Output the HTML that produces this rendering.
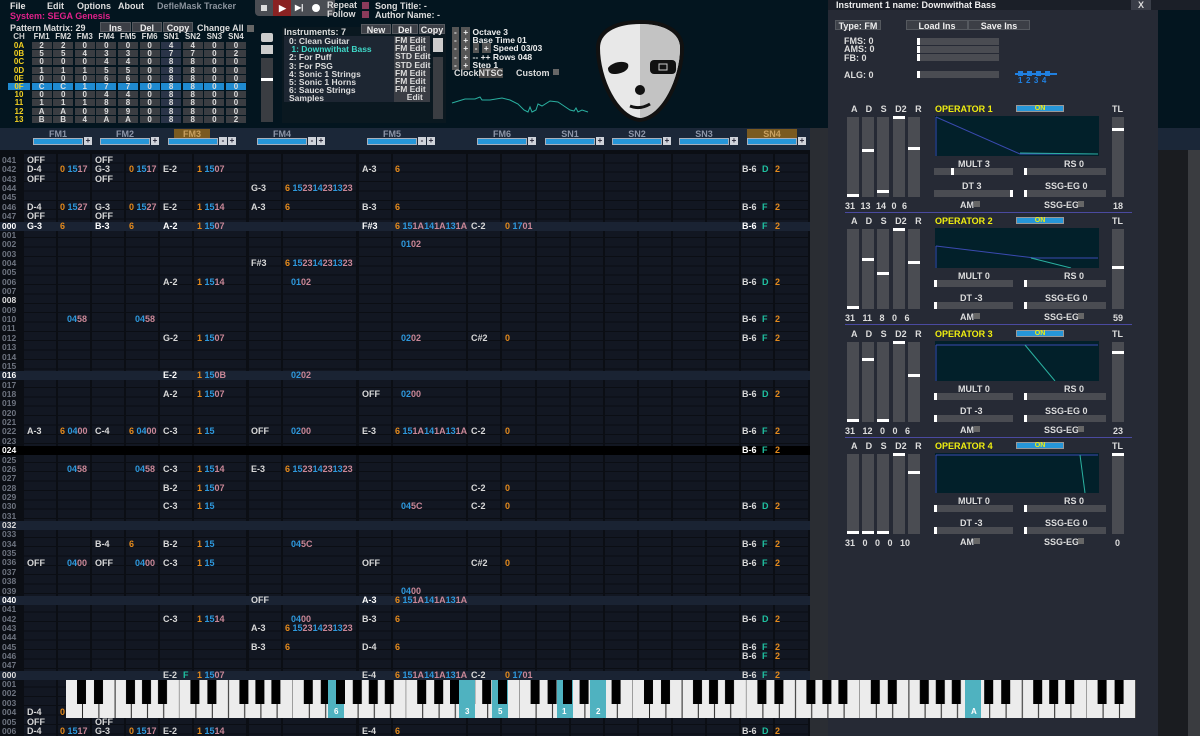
<!DOCTYPE html>
<html><head><meta charset="utf-8"><style>
*{margin:0;padding:0;box-sizing:border-box}
body{width:1200px;height:736px;overflow:hidden;background:#0b0e14;font:bold 9px "Liberation Sans",sans-serif;color:#ddd;position:relative}
.a{position:absolute;white-space:nowrap}
#top{position:absolute;left:0;top:0;width:828px;height:128px;background:#03151f}
.btn{position:absolute;background:#3c3f46;color:#eee;text-align:center;height:10px;line-height:10px;border:1px solid #55595f}
.mr{position:absolute;left:8px;height:7px;display:flex;font-size:8px;line-height:7px}
.mr span{width:20px;margin-right:1.6px;background:#3a3d42;text-align:center;color:#ddd}
.mr span:first-child{background:none;color:#f2d021;width:22px}
.mr span:nth-child(8){background:#2a3448}
.mr.h span{background:#1f8ad0;color:#ddd}
.mr.h span:first-child{background:#1f8ad0;color:#f2d021}
#hdr{position:absolute;left:0;top:128px;width:828px;height:22px;background:#1b2738}
.hl{position:absolute;top:1px;color:#8d96a8;text-align:center;width:50px}
.bar{position:absolute;top:10px;height:7px;width:50px;background:#2696d8;border:1px solid #a8b0bc}
.pl{position:absolute;top:9px;width:8px;height:8px;background:#cfd3da;color:#223;font-size:8px;line-height:8px;text-align:center}
#pat{position:absolute;left:0;top:150px;width:810px;height:586px;background:#0b0e14}
.col{position:absolute;top:4px;height:582px;background:repeating-linear-gradient(to bottom,#121722 0,#121722 8.36px,#0b0e14 8.36px,#0b0e14 9.36px)}
.hb{position:absolute;left:0;width:810px;height:9px;background:#1a2333}
.r{position:absolute;left:0;width:810px;height:9px;line-height:9px}
.r span{position:absolute}
.n{color:#d8d8d8}.o{color:#e48a1c}.b{color:#2e98dc}.p{color:#c98797}.g{color:#1fc0a0}
#ins{position:absolute;left:828px;top:0;width:330px;height:736px;background:#262a35}
.sl{position:absolute;background:#4a4c52}
.kn{position:absolute;background:#fff;height:3px}
.y{color:#f0ee10}
.pm{background:#555;padding:0 2px}
</style></head><body>
<div id="top">
 <div class="a" style="left:10px;top:1px;color:#e8e8e8">File</div>
 <div class="a" style="left:47px;top:1px">Edit</div>
 <div class="a" style="left:77px;top:1px">Options</div>
 <div class="a" style="left:118px;top:1px">About</div>
 <div class="a" style="left:157px;top:1px;color:#8a929c">DefleMask Tracker</div>
 <div class="a" style="left:10px;top:11px;color:#e0208a">System: SEGA Genesis</div>
 <div class="a" style="left:10px;top:23px">Pattern Matrix: 29</div>
 <div class="btn" style="left:100px;top:22px;width:31px">Ins</div>
 <div class="btn" style="left:132px;top:22px;width:30px">Del</div>
 <div class="btn" style="left:163px;top:22px;width:30px">Copy</div>
 <div class="a" style="left:197px;top:23px">Change All</div><div class="a" style="left:247px;top:25px;width:7px;height:7px;background:#666"></div>
 <div class="a" style="left:255px;top:0;width:80px;height:16px;background:#4a4d53;border-radius:0 0 4px 4px"></div>
 <div class="a" style="left:273px;top:0;width:18px;height:16px;background:#8a2222"></div>
 <div class="a" style="left:261px;top:5px;width:6px;height:6px;background:#ddd"></div>
 <div class="a" style="left:279px;top:3px;color:#fff;font-size:9px">▶</div>
 <div class="a" style="left:295px;top:3px;color:#fff;font-size:8px">▶|</div>
 <div class="a" style="left:312px;top:4px;width:8px;height:8px;border-radius:50%;background:#fff"></div>
 <div class="a" style="left:327px;top:0">Repeat</div><div class="a" style="left:362px;top:2px;width:7px;height:7px;background:#8a3a5a"></div>
 <div class="a" style="left:327px;top:9px">Follow</div><div class="a" style="left:362px;top:11px;width:7px;height:7px;background:#8a3a5a"></div>
 <div class="a" style="left:375px;top:1px">Song Title: -</div>
 <div class="a" style="left:375px;top:10px">Author Name: -</div>
 <div class="mr" style="top:33px;line-height:8px;height:8px"><span style="color:#ccc">CH</span><span style="background:none">FM1</span><span style="background:none">FM2</span><span style="background:none">FM3</span><span style="background:none">FM4</span><span style="background:none">FM5</span><span style="background:none">FM6</span><span style="background:none">SN1</span><span style="background:none">SN2</span><span style="background:none">SN3</span><span style="background:none">SN4</span></div>
 <div class="mr" style="top:42px"><span>0A</span><span>2</span><span>2</span><span>0</span><span>0</span><span>0</span><span>0</span><span>4</span><span>4</span><span>0</span><span>0</span></div>
 <div class="mr" style="top:50.2px"><span>0B</span><span>5</span><span>5</span><span>4</span><span>3</span><span>3</span><span>0</span><span>7</span><span>7</span><span>0</span><span>2</span></div>
 <div class="mr" style="top:58.4px"><span>0C</span><span>0</span><span>0</span><span>0</span><span>4</span><span>4</span><span>0</span><span>8</span><span>8</span><span>0</span><span>0</span></div>
 <div class="mr" style="top:66.6px"><span>0D</span><span>1</span><span>1</span><span>1</span><span>5</span><span>5</span><span>0</span><span>8</span><span>8</span><span>0</span><span>0</span></div>
 <div class="mr" style="top:74.8px"><span>0E</span><span>0</span><span>0</span><span>0</span><span>6</span><span>6</span><span>0</span><span>8</span><span>8</span><span>0</span><span>0</span></div>
 <div class="mr h" style="top:83px"><span>0F</span><span>C</span><span>C</span><span>1</span><span>7</span><span>7</span><span>0</span><span>8</span><span>8</span><span>0</span><span>0</span></div>
 <div class="mr" style="top:91.2px"><span>10</span><span>0</span><span>0</span><span>0</span><span>4</span><span>4</span><span>0</span><span>8</span><span>8</span><span>0</span><span>0</span></div>
 <div class="mr" style="top:99.4px"><span>11</span><span>1</span><span>1</span><span>1</span><span>8</span><span>8</span><span>0</span><span>8</span><span>8</span><span>0</span><span>0</span></div>
 <div class="mr" style="top:107.6px"><span>12</span><span>A</span><span>A</span><span>0</span><span>9</span><span>9</span><span>0</span><span>8</span><span>8</span><span>0</span><span>0</span></div>
 <div class="mr" style="top:115.8px"><span>13</span><span>B</span><span>B</span><span>4</span><span>A</span><span>A</span><span>0</span><span>8</span><span>8</span><span>0</span><span>2</span></div>
 <div class="a" style="left:261px;top:33px;width:12px;height:9px;background:#ccc;border-radius:2px"></div>
 <div class="a" style="left:261px;top:45px;width:12px;height:9px;background:#ccc"></div>
 <div class="a" style="left:261px;top:58px;width:12px;height:64px;background:#3a3d42"></div>
 <div class="a" style="left:261px;top:78px;width:12px;height:3px;background:#fff"></div>
 <div class="a" style="left:282px;top:27px;width:164px;height:96px;background:#0a1820"></div>
 <div class="a" style="left:284px;top:27px">Instruments: 7</div>
 <div class="btn" style="left:361px;top:24px;width:30px">New</div>
 <div class="btn" style="left:392px;top:24px;width:26px">Del</div>
 <div class="btn" style="left:419px;top:24px;width:26px">Copy</div>
 <div class="a" style="left:284px;top:36px;width:110px;height:66px;background:#1d2632"></div>
 <div class="a" style="left:289px;top:37px;line-height:8.2px;font-size:8.5px;color:#ddd;white-space:nowrap">0: Clean Guitar<br><span style="color:#3fd8c8">&nbsp;1: Downwithat Bass</span><br>2: For Puff<br>3: For PSG<br>4: Sonic 1 Strings<br>5: Sonic 1 Horns<br>6: Sauce Strings<br>Samples</div>
 <div class="a" style="left:394px;top:36px;width:36px;height:66px;background:#3a3d44;line-height:8.2px;font-size:8.5px;padding-left:1px">FM Edit<br>FM Edit<br>STD Edit<br>STD Edit<br>FM Edit<br>FM Edit<br>FM Edit<br>&nbsp; &nbsp; &nbsp;Edit</div>
 <div class="a" style="left:433px;top:38px;width:10px;height:14px;background:#ccc"></div>
 <div class="a" style="left:433px;top:57px;width:10px;height:62px;background:#3a3d42"></div>
 <div class="a" style="left:452px;top:28px;line-height:8.2px;font-size:8.5px;color:#eee">
 <span class="pm">-</span> <span class="pm">+</span> Octave 3<br>
 <span class="pm">-</span> <span class="pm">+</span> Base Time 01<br>
 <span class="pm">-</span> <span class="pm">+</span> <span class="pm">-</span> <span class="pm">+</span> Speed 03/03<br>
 <span class="pm">-</span> <span class="pm">+</span> -- ++ Rows 048<br>
 <span class="pm">-</span> <span class="pm">+</span> Step 1</div>
 <div class="a" style="left:454px;top:68px">Clock<span style="background:#444">NTSC</span></div>
 <div class="a" style="left:516px;top:68px">Custom</div><div class="a" style="left:553px;top:69px;width:6px;height:6px;background:#666"></div>
 <svg class="a" style="left:450px;top:90px" width="140" height="30"><polyline fill="none" stroke="#2ab0a0" stroke-width="1" points="2,13 15,9 25,9 30,7 32,10 40,10 52,8 60,10 68,14 74,20 78,22 80,17 82,22 86,20 88,14 92,16 100,11 108,12 114,16 120,20 124,21 126,18 128,22 132,20 138,22"/></svg>
 <svg class="a" style="left:594px;top:18px" width="92" height="106" viewBox="0 0 92 106">
  <path d="M46 4 C20 4 4 14 4 30 C4 60 22 100 46 102 C70 100 88 60 88 30 C88 14 72 4 46 4Z" fill="#e8e8e8" stroke="#111" stroke-width="4"/>
  <path d="M46 6 C70 6 86 15 86 30 C86 60 68 98 46 100Z" fill="#c3c3c3"/>
  <path d="M14 50 C18 44 30 42 34 46 C36 52 28 56 20 56 C16 56 14 54 14 50Z" fill="#111"/>
  <rect x="56" y="42" width="26" height="14" rx="4" fill="#111"/>
  <rect x="65" y="46" width="8" height="6" fill="none" stroke="#ccc" stroke-width="1"/>
  <ellipse cx="46" cy="72" rx="5" ry="5" fill="#111"/>
  <path d="M36 88 Q46 92 56 86" stroke="#111" stroke-width="3" fill="none"/>
 </svg>
</div>
<div id="hdr">
 <div class="hl" style="left:33px">FM1</div><div class="bar" style="left:33px"></div><div class="pl" style="left:84px">+</div>
 <div class="hl" style="left:100px">FM2</div><div class="bar" style="left:100px"></div><div class="pl" style="left:151px">+</div>
 <div class="hl" style="left:174px;width:36px;background:#7a5a20;color:#c8a060">FM3</div><div class="bar" style="left:168px"></div><div class="pl" style="left:219px">-</div><div class="pl" style="left:228px">+</div>
 <div class="hl" style="left:257px">FM4</div><div class="bar" style="left:257px"></div><div class="pl" style="left:308px">-</div><div class="pl" style="left:317px">+</div>
 <div class="hl" style="left:367px">FM5</div><div class="bar" style="left:367px"></div><div class="pl" style="left:418px">-</div><div class="pl" style="left:427px">+</div>
 <div class="hl" style="left:477px">FM6</div><div class="bar" style="left:477px"></div><div class="pl" style="left:528px">+</div>
 <div class="hl" style="left:545px">SN1</div><div class="bar" style="left:545px"></div><div class="pl" style="left:596px">+</div>
 <div class="hl" style="left:612px">SN2</div><div class="bar" style="left:612px"></div><div class="pl" style="left:663px">+</div>
 <div class="hl" style="left:679px">SN3</div><div class="bar" style="left:679px"></div><div class="pl" style="left:730px">+</div>
 <div class="hl" style="left:747px;background:#7a5a20;color:#c8a060">SN4</div><div class="bar" style="left:747px"></div><div class="pl" style="left:798px">+</div>
</div>
<div id="pat">
 <div class="col" style="left:24px;width:32px"></div><div class="col" style="left:58px;width:32px"></div>
 <div class="col" style="left:92px;width:32px"></div><div class="col" style="left:126px;width:32px"></div>
 <div class="col" style="left:160px;width:32px"></div><div class="col" style="left:194px;width:52px"></div>
 <div class="col" style="left:249px;width:32px"></div><div class="col" style="left:283px;width:73px"></div>
 <div class="col" style="left:359px;width:32px"></div><div class="col" style="left:393px;width:73px"></div>
 <div class="col" style="left:468px;width:32px"></div><div class="col" style="left:502px;width:33px"></div>
 <div class="col" style="left:537px;width:32px"></div><div class="col" style="left:571px;width:32px"></div>
 <div class="col" style="left:605px;width:32px"></div><div class="col" style="left:639px;width:32px"></div>
 <div class="col" style="left:673px;width:32px"></div><div class="col" style="left:707px;width:32px"></div>
 <div class="col" style="left:741px;width:32px"></div><div class="col" style="left:775px;width:33px"></div>
 <div class="hb" style="top:71.5px"></div><div class="hb" style="top:221.3px"></div><div class="hb" style="top:296px;background:#000"></div><div class="hb" style="top:370.9px"></div><div class="hb" style="top:445.8px"></div><div class="hb" style="top:520.8px"></div>
</div>
<div class="a" style="left:0;top:0;width:810px;height:736px">
<pre style="position:absolute;white-space:pre;left:2px;top:156px;font:bold 8.5px 'Liberation Sans',sans-serif;line-height:9.36px;color:#6e7480">041
042
043
044
045
046
047
<span style="color:#fff">000</span>
001
002
003
004
005
006
007
<span style="color:#ddd">008</span>
009
010
011
012
013
014
015
<span style="color:#fff">016</span>
017
018
019
020
021
022
023
<span style="color:#fff">024</span>
025
026
027
028
029
030
031
<span style="color:#ddd">032</span>
033
034
035
036
037
038
039
<span style="color:#fff">040</span>
041
042
043
044
045
046
047
<span style="color:#ddd">000</span>
001
002
003
004
005
006</pre>
<div class="r" style="top:156px"><span class="n" style="left:27px">OFF</span><span class="n" style="left:95px">OFF</span></div>
<div class="r" style="top:165.4px"><span class="n" style="left:27px">D-4</span><span style="left:60px"><b class="o">0</b> <b class="b">15</b><b class="p">17</b></span><span class="n" style="left:95px">G-3</span><span style="left:129px"><b class="o">0</b> <b class="b">15</b><b class="p">17</b></span><span class="n" style="left:163px">E-2</span><span style="left:197px"><b class="o">1</b> <b class="b">15</b><b class="p">07</b></span><span class="n" style="left:362px">A-3</span><span class="o" style="left:395px">6</span><span class="n" style="left:742px">B-6</span><span class="g" style="left:762px">D</span><span class="o" style="left:775px">2</span></div>
<div class="r" style="top:174.7px"><span class="n" style="left:27px">OFF</span><span class="n" style="left:95px">OFF</span></div>
<div class="r" style="top:184.1px"><span class="n" style="left:251px">G-3</span><span style="left:285px"><b class="o">6</b> <b class="b">15</b><b class="p">23</b><b class="b">14</b><b class="p">23</b><b class="b">13</b><b class="p">23</b></span></div>
<div class="r" style="top:202.8px"><span class="n" style="left:27px">D-4</span><span style="left:60px"><b class="o">0</b> <b class="b">15</b><b class="p">27</b></span><span class="n" style="left:95px">G-3</span><span style="left:129px"><b class="o">0</b> <b class="b">15</b><b class="p">27</b></span><span class="n" style="left:163px">E-2</span><span style="left:197px"><b class="o">1</b> <b class="b">15</b><b class="p">14</b></span><span class="n" style="left:251px">A-3</span><span class="o" style="left:285px">6</span><span class="n" style="left:362px">B-3</span><span class="o" style="left:395px">6</span><span class="n" style="left:742px">B-6</span><span class="g" style="left:762px">F</span><span class="o" style="left:775px">2</span></div>
<div class="r" style="top:212.2px"><span class="n" style="left:27px">OFF</span><span class="n" style="left:95px">OFF</span></div>
<div class="r" style="top:221.5px"><span class="n" style="left:27px;color:#fff">G-3</span><span class="o" style="left:60px">6</span><span class="n" style="left:95px;color:#fff">B-3</span><span class="o" style="left:129px">6</span><span class="n" style="left:163px;color:#fff">A-2</span><span style="left:197px"><b class="o">1</b> <b class="b">15</b><b class="p">07</b></span><span class="n" style="left:362px;color:#fff">F#3</span><span style="left:395px"><b class="o">6</b> <b class="b">15</b><b class="p">1A</b><b class="b">14</b><b class="p">1A</b><b class="b">13</b><b class="p">1A</b></span><span class="n" style="left:471px">C-2</span><span style="left:505px"><b class="o">0</b> <b class="b">17</b><b class="p">01</b></span><span class="n" style="left:742px;color:#fff">B-6</span><span class="g" style="left:762px">F</span><span class="o" style="left:775px">2</span></div>
<div class="r" style="top:240.2px"><span style="left:401px"><b class="b">01</b><b class="p">02</b></span></div>
<div class="r" style="top:258.9px"><span class="n" style="left:251px">F#3</span><span style="left:285px"><b class="o">6</b> <b class="b">15</b><b class="p">23</b><b class="b">14</b><b class="p">23</b><b class="b">13</b><b class="p">23</b></span></div>
<div class="r" style="top:277.7px"><span class="n" style="left:163px">A-2</span><span style="left:197px"><b class="o">1</b> <b class="b">15</b><b class="p">14</b></span><span style="left:291px"><b class="b">01</b><b class="p">02</b></span><span class="n" style="left:742px">B-6</span><span class="g" style="left:762px">D</span><span class="o" style="left:775px">2</span></div>
<div class="r" style="top:315.1px"><span style="left:67px"><b class="b">04</b><b class="p">58</b></span><span style="left:135px"><b class="b">04</b><b class="p">58</b></span><span class="n" style="left:742px">B-6</span><span class="g" style="left:762px">F</span><span class="o" style="left:775px">2</span></div>
<div class="r" style="top:333.8px"><span class="n" style="left:163px">G-2</span><span style="left:197px"><b class="o">1</b> <b class="b">15</b><b class="p">07</b></span><span style="left:401px"><b class="b">02</b><b class="p">02</b></span><span class="n" style="left:471px">C#2</span><span class="o" style="left:505px">0</span><span class="n" style="left:742px">B-6</span><span class="g" style="left:762px">F</span><span class="o" style="left:775px">2</span></div>
<div class="r" style="top:371.3px"><span class="n" style="left:163px;color:#fff">E-2</span><span style="left:197px"><b class="o">1</b> <b class="b">15</b><b class="p">0B</b></span><span style="left:291px"><b class="b">02</b><b class="p">02</b></span></div>
<div class="r" style="top:390px"><span class="n" style="left:163px">A-2</span><span style="left:197px"><b class="o">1</b> <b class="b">15</b><b class="p">07</b></span><span class="n" style="left:362px">OFF</span><span style="left:401px"><b class="b">02</b><b class="p">00</b></span><span class="n" style="left:742px">B-6</span><span class="g" style="left:762px">D</span><span class="o" style="left:775px">2</span></div>
<div class="r" style="top:427.4px"><span class="n" style="left:27px">A-3</span><span style="left:60px"><b class="o">6</b> <b class="b">04</b><b class="p">00</b></span><span class="n" style="left:95px">C-4</span><span style="left:129px"><b class="o">6</b> <b class="b">04</b><b class="p">00</b></span><span class="n" style="left:163px">C-3</span><span style="left:197px"><b class="o">1</b> <b class="b">15</b></span><span class="n" style="left:251px">OFF</span><span style="left:291px"><b class="b">02</b><b class="p">00</b></span><span class="n" style="left:362px">E-3</span><span style="left:395px"><b class="o">6</b> <b class="b">15</b><b class="p">1A</b><b class="b">14</b><b class="p">1A</b><b class="b">13</b><b class="p">1A</b></span><span class="n" style="left:471px">C-2</span><span class="o" style="left:505px">0</span><span class="n" style="left:742px">B-6</span><span class="g" style="left:762px">F</span><span class="o" style="left:775px">2</span></div>
<div class="r" style="top:446.1px"><span class="n" style="left:742px;color:#fff">B-6</span><span class="g" style="left:762px">F</span><span class="o" style="left:775px">2</span></div>
<div class="r" style="top:464.9px"><span style="left:67px"><b class="b">04</b><b class="p">58</b></span><span style="left:135px"><b class="b">04</b><b class="p">58</b></span><span class="n" style="left:163px">C-3</span><span style="left:197px"><b class="o">1</b> <b class="b">15</b><b class="p">14</b></span><span class="n" style="left:251px">E-3</span><span style="left:285px"><b class="o">6</b> <b class="b">15</b><b class="p">23</b><b class="b">14</b><b class="p">23</b><b class="b">13</b><b class="p">23</b></span></div>
<div class="r" style="top:483.6px"><span class="n" style="left:163px">B-2</span><span style="left:197px"><b class="o">1</b> <b class="b">15</b><b class="p">07</b></span><span class="n" style="left:471px">C-2</span><span class="o" style="left:505px">0</span></div>
<div class="r" style="top:502.3px"><span class="n" style="left:163px">C-3</span><span style="left:197px"><b class="o">1</b> <b class="b">15</b></span><span style="left:401px"><b class="b">04</b><b class="p">5C</b></span><span class="n" style="left:471px">C-2</span><span class="o" style="left:505px">0</span><span class="n" style="left:742px">B-6</span><span class="g" style="left:762px">D</span><span class="o" style="left:775px">2</span></div>
<div class="r" style="top:539.7px"><span class="n" style="left:95px">B-4</span><span class="o" style="left:129px">6</span><span class="n" style="left:163px">B-2</span><span style="left:197px"><b class="o">1</b> <b class="b">15</b></span><span style="left:291px"><b class="b">04</b><b class="p">5C</b></span><span class="n" style="left:742px">B-6</span><span class="g" style="left:762px">F</span><span class="o" style="left:775px">2</span></div>
<div class="r" style="top:558.5px"><span class="n" style="left:27px">OFF</span><span style="left:67px"><b class="b">04</b><b class="p">00</b></span><span class="n" style="left:95px">OFF</span><span style="left:135px"><b class="b">04</b><b class="p">00</b></span><span class="n" style="left:163px">C-3</span><span style="left:197px"><b class="o">1</b> <b class="b">15</b></span><span class="n" style="left:362px">OFF</span><span class="n" style="left:471px">C#2</span><span class="o" style="left:505px">0</span><span class="n" style="left:742px">B-6</span><span class="g" style="left:762px">F</span><span class="o" style="left:775px">2</span></div>
<div class="r" style="top:586.5px"><span style="left:401px"><b class="b">04</b><b class="p">00</b></span></div>
<div class="r" style="top:595.9px"><span class="n" style="left:251px">OFF</span><span class="n" style="left:362px;color:#fff">A-3</span><span style="left:395px"><b class="o">6</b> <b class="b">15</b><b class="p">1A</b><b class="b">14</b><b class="p">1A</b><b class="b">13</b><b class="p">1A</b></span></div>
<div class="r" style="top:614.6px"><span class="n" style="left:163px">C-3</span><span style="left:197px"><b class="o">1</b> <b class="b">15</b><b class="p">14</b></span><span style="left:291px"><b class="b">04</b><b class="p">00</b></span><span class="n" style="left:362px">B-3</span><span class="o" style="left:395px">6</span><span class="n" style="left:742px">B-6</span><span class="g" style="left:762px">D</span><span class="o" style="left:775px">2</span></div>
<div class="r" style="top:624px"><span class="n" style="left:251px">A-3</span><span style="left:285px"><b class="o">6</b> <b class="b">15</b><b class="p">23</b><b class="b">14</b><b class="p">23</b><b class="b">13</b><b class="p">23</b></span></div>
<div class="r" style="top:642.7px"><span class="n" style="left:251px">B-3</span><span class="o" style="left:285px">6</span><span class="n" style="left:362px">D-4</span><span class="o" style="left:395px">6</span><span class="n" style="left:742px">B-6</span><span class="g" style="left:762px">F</span><span class="o" style="left:775px">2</span></div>
<div class="r" style="top:652.1px"><span class="n" style="left:742px">B-6</span><span class="g" style="left:762px">F</span><span class="o" style="left:775px">2</span></div>
<div class="r" style="top:670.8px"><span class="n" style="left:163px">E-2</span><span class="g" style="left:183px">F</span><span style="left:197px"><b class="o">1</b> <b class="b">15</b><b class="p">07</b></span><span class="n" style="left:362px">E-4</span><span style="left:395px"><b class="o">6</b> <b class="b">15</b><b class="p">1A</b><b class="b">14</b><b class="p">1A</b><b class="b">13</b><b class="p">1A</b></span><span class="n" style="left:471px">C-2</span><span style="left:505px"><b class="o">0</b> <b class="b">17</b><b class="p">01</b></span><span class="n" style="left:742px">B-6</span><span class="g" style="left:762px">F</span><span class="o" style="left:775px">2</span></div>
<div class="r" style="top:708.2px"><span class="n" style="left:27px">D-4</span><span class="o" style="left:60px">0</span></div>
<div class="r" style="top:717.6px"><span class="n" style="left:27px">OFF</span><span class="n" style="left:95px">OFF</span></div>
<div class="r" style="top:727px"><span class="n" style="left:27px">D-4</span><span style="left:60px"><b class="o">0</b> <b class="b">15</b><b class="p">17</b></span><span class="n" style="left:95px">G-3</span><span style="left:129px"><b class="o">0</b> <b class="b">15</b><b class="p">17</b></span><span class="n" style="left:163px">E-2</span><span style="left:197px"><b class="o">1</b> <b class="b">15</b><b class="p">14</b></span><span class="n" style="left:362px">E-4</span><span class="o" style="left:395px">6</span><span class="n" style="left:742px">B-6</span><span class="g" style="left:762px">D</span><span class="o" style="left:775px">2</span></div>
</div>
<div class="a" style="left:810px;top:128px;width:18px;height:608px;background:#2a2d33"></div>
<div class="a" style="left:1158px;top:0;width:42px;height:128px;background:#03151f"></div>
<div class="a" style="left:1158px;top:128px;width:42px;height:22px;background:#1b2738"></div>
<div class="a" style="left:1158px;top:150px;width:42px;height:586px;background:#1a1c20"></div>
<div class="a" style="left:1188px;top:150px;width:12px;height:586px;background:#3a3c40"></div>
<div id="ins">
 <div class="a" style="left:0;top:0;width:372px;height:10px;background:#1b1f28"></div>
 <div class="a" style="left:8px;top:0;color:#eee">Instrument 1 name: Downwithat Bass</div>
 <div class="a" style="left:303px;top:0;width:20px;height:10px;background:#3a3e48;text-align:center">X</div>
 <div class="btn" style="left:7px;top:20px;width:46px;background:#3e424a">Type: FM</div>
 <div class="btn" style="left:78px;top:20px;width:62px">Load Ins</div>
 <div class="btn" style="left:140px;top:20px;width:62px">Save Ins</div>
 <div class="a" style="left:16px;top:37px;line-height:8.3px">FMS: 0<br>AMS: 0<br>FB: 0</div>
 <div class="sl" style="left:89px;top:38px;width:82px;height:7px"></div><div class="kn" style="left:89px;top:38px;width:3px;height:7px"></div>
 <div class="sl" style="left:89px;top:46px;width:82px;height:7px"></div><div class="kn" style="left:89px;top:46px;width:3px;height:7px"></div>
 <div class="sl" style="left:89px;top:54px;width:82px;height:7px"></div><div class="kn" style="left:89px;top:54px;width:3px;height:7px"></div>
 <div class="a" style="left:16px;top:70px">ALG: 0</div>
 <div class="sl" style="left:89px;top:71px;width:82px;height:7px"></div><div class="kn" style="left:89px;top:71px;width:3px;height:7px"></div>
 <div class="a" style="left:187px;top:73px;width:42px;height:2px;background:#2080e0"></div>
 <div class="a" style="left:190px;top:71px;width:5px;height:5px;background:#2080e0"></div><div class="a" style="left:199px;top:71px;width:5px;height:5px;background:#2080e0"></div><div class="a" style="left:208px;top:71px;width:5px;height:5px;background:#2080e0"></div><div class="a" style="left:217px;top:71px;width:5px;height:5px;background:#2080e0"></div>
 <div class="a" style="left:190px;top:76px;color:#2080e0;letter-spacing:3.5px;font-size:8px">1234</div>
 <div class="a" style="left:0;top:104px;width:372px;height:113px">
  <div class="a" style="left:23px;top:0;word-spacing:6px">A D S D2 R</div>
  <div class="a" style="left:107px;top:0"><span class="y">OPERATOR 1</span></div>
  <div class="a" style="left:188px;top:1px;width:48px;height:7px;background:#2696d8;border:1px solid #999;color:#f0ee10;font-size:7px;line-height:5px;text-align:center">ON</div>
  <div class="a" style="left:284px;top:0">TL</div>
  <div class="sl" style="left:19px;top:13px;width:12px;height:80px"></div><div class="kn" style="left:19px;top:90px;width:12px"></div>
  <div class="sl" style="left:34px;top:13px;width:12px;height:80px"></div><div class="kn" style="left:34px;top:45px;width:12px"></div>
  <div class="sl" style="left:49px;top:13px;width:12px;height:80px"></div><div class="kn" style="left:49px;top:86px;width:12px"></div>
  <div class="sl" style="left:65px;top:13px;width:12px;height:80px"></div><div class="kn" style="left:65px;top:12px;width:12px"></div>
  <div class="sl" style="left:80px;top:13px;width:12px;height:80px"></div><div class="kn" style="left:80px;top:43px;width:12px"></div>
  <div class="sl" style="left:284px;top:13px;width:12px;height:80px"></div><div class="kn" style="left:284px;top:24px;width:12px"></div>
  <div class="a" style="left:17px;top:97px;word-spacing:3px">31 13 14 0 6</div><div class="a" style="left:285px;top:97px">18</div>
  <svg class="a" style="left:107px;top:12px" width="164" height="40"><rect width="164" height="40" fill="#02202a"/><polyline points="1,1 85,38 163,38" fill="none" stroke="#3a4ab0"/><line x1="1" y1="1" x2="1" y2="40" stroke="#3a4ab0"/><polyline points="85,37 163,38" stroke="#2ab0a0" fill="none"/></svg>
  <div class="a" style="left:130px;top:55px">MULT 3</div><div class="a" style="left:236px;top:55px">RS 0</div>
  <div class="sl" style="left:106px;top:64px;width:79px;height:7px"></div><div class="kn" style="left:123px;top:64px;width:3px;height:7px"></div>
  <div class="sl" style="left:196px;top:64px;width:82px;height:7px"></div><div class="kn" style="left:196px;top:64px;width:3px;height:7px"></div>
  <div class="a" style="left:134px;top:77px">DT 3</div><div class="a" style="left:217px;top:77px">SSG-EG 0</div>
  <div class="sl" style="left:106px;top:86px;width:79px;height:7px"></div><div class="kn" style="left:182px;top:86px;width:3px;height:7px"></div>
  <div class="sl" style="left:196px;top:86px;width:82px;height:7px"></div><div class="kn" style="left:196px;top:86px;width:3px;height:7px"></div>
  <div class="a" style="left:132px;top:96px">AM</div><div class="a" style="left:146px;top:97px;width:6px;height:6px;background:#666"></div>
  <div class="a" style="left:216px;top:96px">SSG-EG</div><div class="a" style="left:250px;top:97px;width:6px;height:6px;background:#666"></div>
  <div class="a" style="left:17px;top:108px;width:287px;height:1px;background:#4a4aa0"></div>
 </div>
 <div class="a" style="left:0;top:216px;width:372px;height:113px">
  <div class="a" style="left:23px;top:0;word-spacing:6px">A D S D2 R</div>
  <div class="a" style="left:107px;top:0"><span class="y">OPERATOR 2</span></div>
  <div class="a" style="left:188px;top:1px;width:48px;height:7px;background:#2696d8;border:1px solid #999;color:#f0ee10;font-size:7px;line-height:5px;text-align:center">ON</div>
  <div class="a" style="left:284px;top:0">TL</div>
  <div class="sl" style="left:19px;top:13px;width:12px;height:80px"></div><div class="kn" style="left:19px;top:90px;width:12px"></div>
  <div class="sl" style="left:34px;top:13px;width:12px;height:80px"></div><div class="kn" style="left:34px;top:42px;width:12px"></div>
  <div class="sl" style="left:49px;top:13px;width:12px;height:80px"></div><div class="kn" style="left:49px;top:56px;width:12px"></div>
  <div class="sl" style="left:65px;top:13px;width:12px;height:80px"></div><div class="kn" style="left:65px;top:12px;width:12px"></div>
  <div class="sl" style="left:80px;top:13px;width:12px;height:80px"></div><div class="kn" style="left:80px;top:45px;width:12px"></div>
  <div class="sl" style="left:284px;top:13px;width:12px;height:80px"></div><div class="kn" style="left:284px;top:50px;width:12px"></div>
  <div class="a" style="left:17px;top:97px;word-spacing:5px">31 11 8 0 6</div><div class="a" style="left:285px;top:97px">59</div>
  <svg class="a" style="left:107px;top:12px" width="164" height="40"><rect width="164" height="40" fill="#02202a"/><polyline points="1,18 100,30 163,30" fill="none" stroke="#3a4ab0"/><line x1="1" y1="18" x2="1" y2="40" stroke="#3a4ab0"/><line x1="96" y1="30" x2="136" y2="40" stroke="#2ab0a0"/></svg>
  <div class="a" style="left:130px;top:55px">MULT 0</div><div class="a" style="left:236px;top:55px">RS 0</div>
  <div class="sl" style="left:106px;top:64px;width:79px;height:7px"></div><div class="kn" style="left:106px;top:64px;width:3px;height:7px"></div>
  <div class="sl" style="left:196px;top:64px;width:82px;height:7px"></div><div class="kn" style="left:196px;top:64px;width:3px;height:7px"></div>
  <div class="a" style="left:132px;top:77px">DT -3</div><div class="a" style="left:217px;top:77px">SSG-EG 0</div>
  <div class="sl" style="left:106px;top:86px;width:79px;height:7px"></div><div class="kn" style="left:106px;top:86px;width:3px;height:7px"></div>
  <div class="sl" style="left:196px;top:86px;width:82px;height:7px"></div><div class="kn" style="left:196px;top:86px;width:3px;height:7px"></div>
  <div class="a" style="left:132px;top:96px">AM</div><div class="a" style="left:146px;top:97px;width:6px;height:6px;background:#666"></div>
  <div class="a" style="left:216px;top:96px">SSG-EG</div><div class="a" style="left:250px;top:97px;width:6px;height:6px;background:#666"></div>
  <div class="a" style="left:17px;top:108px;width:287px;height:1px;background:#4a4aa0"></div>
 </div>
 <div class="a" style="left:0;top:329px;width:372px;height:113px">
  <div class="a" style="left:23px;top:0;word-spacing:6px">A D S D2 R</div>
  <div class="a" style="left:107px;top:0"><span class="y">OPERATOR 3</span></div>
  <div class="a" style="left:188px;top:1px;width:48px;height:7px;background:#2696d8;border:1px solid #999;color:#f0ee10;font-size:7px;line-height:5px;text-align:center">ON</div>
  <div class="a" style="left:284px;top:0">TL</div>
  <div class="sl" style="left:19px;top:13px;width:12px;height:80px"></div><div class="kn" style="left:19px;top:90px;width:12px"></div>
  <div class="sl" style="left:34px;top:13px;width:12px;height:80px"></div><div class="kn" style="left:34px;top:29px;width:12px"></div>
  <div class="sl" style="left:49px;top:13px;width:12px;height:80px"></div><div class="kn" style="left:49px;top:90px;width:12px"></div>
  <div class="sl" style="left:65px;top:13px;width:12px;height:80px"></div><div class="kn" style="left:65px;top:12px;width:12px"></div>
  <div class="sl" style="left:80px;top:13px;width:12px;height:80px"></div><div class="kn" style="left:80px;top:45px;width:12px"></div>
  <div class="sl" style="left:284px;top:13px;width:12px;height:80px"></div><div class="kn" style="left:284px;top:22px;width:12px"></div>
  <div class="a" style="left:17px;top:97px;word-spacing:5px">31 12 0 0 6</div><div class="a" style="left:285px;top:97px">23</div>
  <svg class="a" style="left:107px;top:12px" width="164" height="40"><rect width="164" height="40" fill="#02202a"/><polyline points="1,4 163,4" fill="none" stroke="#3a4ab0"/><line x1="1" y1="4" x2="1" y2="40" stroke="#3a4ab0"/><line x1="90" y1="4" x2="120" y2="40" stroke="#2ab0a0"/></svg>
  <div class="a" style="left:130px;top:55px">MULT 0</div><div class="a" style="left:236px;top:55px">RS 0</div>
  <div class="sl" style="left:106px;top:64px;width:79px;height:7px"></div><div class="kn" style="left:106px;top:64px;width:3px;height:7px"></div>
  <div class="sl" style="left:196px;top:64px;width:82px;height:7px"></div><div class="kn" style="left:196px;top:64px;width:3px;height:7px"></div>
  <div class="a" style="left:132px;top:77px">DT -3</div><div class="a" style="left:217px;top:77px">SSG-EG 0</div>
  <div class="sl" style="left:106px;top:86px;width:79px;height:7px"></div><div class="kn" style="left:106px;top:86px;width:3px;height:7px"></div>
  <div class="sl" style="left:196px;top:86px;width:82px;height:7px"></div><div class="kn" style="left:196px;top:86px;width:3px;height:7px"></div>
  <div class="a" style="left:132px;top:96px">AM</div><div class="a" style="left:146px;top:97px;width:6px;height:6px;background:#666"></div>
  <div class="a" style="left:216px;top:96px">SSG-EG</div><div class="a" style="left:250px;top:97px;width:6px;height:6px;background:#666"></div>
  <div class="a" style="left:17px;top:108px;width:287px;height:1px;background:#4a4aa0"></div>
 </div>
 <div class="a" style="left:0;top:441px;width:372px;height:113px">
  <div class="a" style="left:23px;top:0;word-spacing:6px">A D S D2 R</div>
  <div class="a" style="left:107px;top:0"><span class="y">OPERATOR 4</span></div>
  <div class="a" style="left:188px;top:1px;width:48px;height:7px;background:#2696d8;border:1px solid #999;color:#f0ee10;font-size:7px;line-height:5px;text-align:center">ON</div>
  <div class="a" style="left:284px;top:0">TL</div>
  <div class="sl" style="left:19px;top:13px;width:12px;height:80px"></div><div class="kn" style="left:19px;top:90px;width:12px"></div>
  <div class="sl" style="left:34px;top:13px;width:12px;height:80px"></div><div class="kn" style="left:34px;top:90px;width:12px"></div>
  <div class="sl" style="left:49px;top:13px;width:12px;height:80px"></div><div class="kn" style="left:49px;top:90px;width:12px"></div>
  <div class="sl" style="left:65px;top:13px;width:12px;height:80px"></div><div class="kn" style="left:65px;top:12px;width:12px"></div>
  <div class="sl" style="left:80px;top:13px;width:12px;height:80px"></div><div class="kn" style="left:80px;top:30px;width:12px"></div>
  <div class="sl" style="left:284px;top:13px;width:12px;height:80px"></div><div class="kn" style="left:284px;top:12px;width:12px"></div>
  <div class="a" style="left:17px;top:97px;word-spacing:5px">31 0 0 0 10</div><div class="a" style="left:287px;top:97px">0</div>
  <svg class="a" style="left:107px;top:12px" width="164" height="40"><rect width="164" height="40" fill="#02202a"/><polyline points="1,2 163,2" fill="none" stroke="#3a4ab0"/><line x1="1" y1="2" x2="1" y2="40" stroke="#3a4ab0"/><line x1="145" y1="2" x2="150" y2="40" stroke="#2ab0a0"/></svg>
  <div class="a" style="left:130px;top:55px">MULT 0</div><div class="a" style="left:236px;top:55px">RS 0</div>
  <div class="sl" style="left:106px;top:64px;width:79px;height:7px"></div><div class="kn" style="left:106px;top:64px;width:3px;height:7px"></div>
  <div class="sl" style="left:196px;top:64px;width:82px;height:7px"></div><div class="kn" style="left:196px;top:64px;width:3px;height:7px"></div>
  <div class="a" style="left:132px;top:77px">DT -3</div><div class="a" style="left:217px;top:77px">SSG-EG 0</div>
  <div class="sl" style="left:106px;top:86px;width:79px;height:7px"></div><div class="kn" style="left:106px;top:86px;width:3px;height:7px"></div>
  <div class="sl" style="left:196px;top:86px;width:82px;height:7px"></div><div class="kn" style="left:196px;top:86px;width:3px;height:7px"></div>
  <div class="a" style="left:132px;top:96px">AM</div><div class="a" style="left:146px;top:97px;width:6px;height:6px;background:#666"></div>
  <div class="a" style="left:216px;top:96px">SSG-EG</div><div class="a" style="left:250px;top:97px;width:6px;height:6px;background:#666"></div>
 </div>
</div>
<svg class="a" style="left:66px;top:680px" width="1070" height="38">
 <defs><pattern id="oct" x="0" y="0" width="113.4" height="38" patternUnits="userSpaceOnUse">
  <rect width="113.4" height="38" fill="#ececec"/>
  <g fill="#222"><rect x="16" y="0" width="1" height="38"/><rect x="32.4" width="1" height="38"/><rect x="48.6" width="1" height="38"/><rect x="64.8" width="1" height="38"/><rect x="81" width="1" height="38"/><rect x="97.2" width="1" height="38"/><rect x="113" width="1" height="38"/></g>
  <g fill="#000"><rect x="11" width="9" height="24"/><rect x="28" width="9" height="24"/><rect x="60" width="9" height="24"/><rect x="76" width="9" height="24"/><rect x="92" width="9" height="24"/></g>
 </pattern></defs>
 <rect width="1070" height="38" fill="url(#oct)"/>
 <g fill="#4fb2c0"><rect x="262" y="0" width="16" height="38"/><rect x="393" y="0" width="16" height="38"/><rect x="426" y="0" width="16" height="38"/><rect x="491" y="0" width="16" height="38"/><rect x="524" y="0" width="16" height="38"/><rect x="899" y="0" width="16" height="38"/></g>
 <g fill="#000"><rect x="270" width="9" height="24"/><rect x="384" width="9" height="24"/><rect x="432" width="9" height="24"/><rect x="497" width="9" height="24"/></g>
 <g fill="#fff" font-size="8" font-family="Liberation Sans" font-weight="bold"><text x="268" y="34">6</text><text x="399" y="34">3</text><text x="432" y="34">5</text><text x="496" y="34">1</text><text x="530" y="34">2</text><text x="905" y="34">A</text></g>
</svg>
</body></html>
